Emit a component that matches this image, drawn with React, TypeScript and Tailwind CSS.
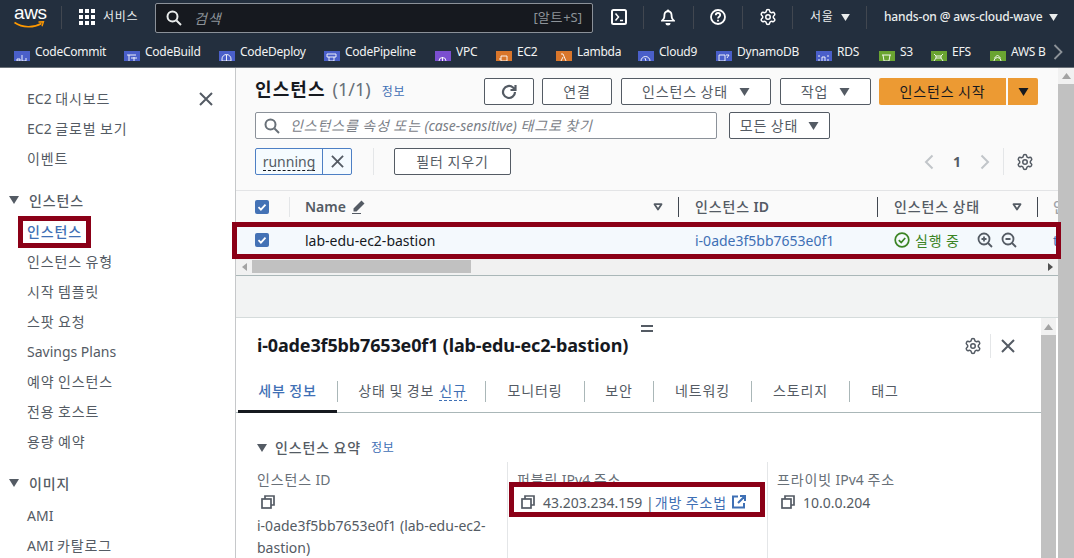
import React from "react";
import { Settings } from "lucide-react";

const FONT = { fontFamily: '"Noto Sans","Noto Sans CJK KR",sans-serif' };

// Hangul in the reference is set a little wider than the installed CJK face.
const K = ({ children, k = "" }: { children: string; k?: string }) => (
  <>
    {children.split(/([\uac00-\ud7a3]+)/).map((part, i) =>
      i % 2 === 1 ? (
        <span key={i} className={`tracking-[0.06em] ${k}`}>{part}</span>
      ) : (
        <React.Fragment key={i}>{part}</React.Fragment>
      )
    )}
  </>
);

const Tri = ({ c = "#545b64", w = 10, h = 8, outline = false }: { c?: string; w?: number; h?: number; outline?: boolean }) => (
  <svg width={w} height={h} viewBox="0 0 10 8" className="shrink-0">
    {outline ? (
      <path d="M1.5 1.2h7L5 6.6z" fill="none" stroke={c} strokeWidth="1.8" strokeLinejoin="round" />
    ) : (
      <path d="M0 0h10L5 8z" fill={c} />
    )}
  </svg>
);

const Gear = ({ c = "#545b64", s = 18 }: { c?: string; s?: number }) => <Settings size={s} color={c} strokeWidth={2} className="shrink-0" />;

const Close = ({ c = "#545b64", s = 14, sw = 2 }: { c?: string; s?: number; sw?: number }) => (
  <svg width={s} height={s} viewBox="0 0 14 14" stroke={c} strokeWidth={sw} className="shrink-0">
    <path d="M1 1l12 12M13 1L1 13" />
  </svg>
);

const Copy = () => (
  <svg width="14" height="14" viewBox="0 0 14 14" fill="none" stroke="#545b64" strokeWidth="1.7" className="shrink-0">
    <rect x="1" y="4" width="9" height="9" />
    <path d="M4 4V1h9v9h-3" />
  </svg>
);

const Check = () => (
  <span className="flex h-[14px] w-[14px] shrink-0 items-center justify-center rounded-[2px] bg-[#4472b5]">
    <svg width="10" height="10" viewBox="0 0 10 10" fill="none" stroke="#fff" strokeWidth="1.8">
      <path d="M1.5 5.2l2.4 2.4 4.6-5" />
    </svg>
  </span>
);

const Sep = ({ h = "h-[23px]" }: { h?: string }) => <span className={`block w-px shrink-0 bg-[#414750] ${h}`} />;

const favs: [string, string, string, number][] = [
  ["CodeCommit", "#4a5fc9", "M3 8h3v2H3zM8 4v6h4V7", 110],
  ["CodeBuild", "#4a5fc9", "M3 4h9M5 4v6M10 6v4M7 7h6", 95],
  ["CodeDeploy", "#4a5fc9", "M3 8a4.5 4.5 0 0 1 9 0v2H3zM7.5 4v6", 105],
  ["CodePipeline", "#4a5fc9", "M3 3h9v3H3zM5 6v4h5V6", 111],
  ["VPC", "#7b4fd0", "M4 10a3.5 3.5 0 0 1 7 0M7.5 6v4", 61],
  ["EC2", "#d9762b", "M5 5h6v5H5zM3 8h2", 60],
  ["Lambda", "#d9762b", "M5 3h2l3 7M7 6l-2 4", 82],
  ["Cloud9", "#4a5fc9", "M3 10a4.5 4.5 0 0 1 9 0M7 7l1 3", 78],
  ["DynamoDB", "#4a5fc9", "M3 4h6v6H3zM10 4h3l-2 3", 100],
  ["RDS", "#4a5fc9", "M3 4v2M3 8v2M12 4v2M12 8v2M6 10V6h3v4", 63],
  ["S3", "#6aa431", "M3 4h9M4 4l1 6h5l1-6", 52],
  ["EFS", "#6aa431", "M3 3l2 2M12 3l-2 2M5 5h5v2H5zM3 10l2-3M12 10l-2-3", 59],
  ["AWS B", "#6aa431", "M4 10a3.5 3.5 0 0 1 7 0M7.5 4l3 3M7.5 4l-3 3", 58],
];

const Btn = ({ w, children, className = "" }: { w: string; children: React.ReactNode; className?: string }) => (
  <button className={`flex h-[27px] shrink-0 items-center justify-center rounded-[2px] border border-[#545b64] bg-white text-[14px] text-[#545b64] ${w} ${className}`}>
    {children}
  </button>
);

const navTop = ["EC2 대시보드", "EC2 글로벌 보기", "이벤트"];
const navInst = ["인스턴스 유형", "시작 템플릿", "스팟 요청", "Savings Plans", "예약 인스턴스", "전용 호스트", "용량 예약"];

const NavItem = ({ children }: { children: string }) => (
  <div className="flex h-[30px] items-center pl-[27px] text-[14px] text-[#545b64]">
    <span><K>{children}</K></span>
  </div>
);
const NavHead = ({ children, className = "" }: { children: string; className?: string }) => (
  <div className={`flex h-[30px] items-center gap-[10px] pl-[9px] text-[14px] font-medium text-[#545b64] ${className}`}>
    <Tri />
    <span><K>{children}</K></span>
  </div>
);

const Sidebar = () => (
  <aside className="relative w-[236px] shrink-0 border-r border-[#c6c8ca] bg-white pt-[15px]">
    <button className="absolute left-[199px] top-[24px]">
      <Close />
    </button>
    {navTop.map((n) => (
      <NavItem key={n}>{n}</NavItem>
    ))}
    <NavHead className="mt-[12px]">인스턴스</NavHead>
    <div className="mt-[1px] flex h-[30px] items-center pl-[27px] text-[14px] font-medium text-[#3f70b5]">
      <span><K>인스턴스</K></span>
    </div>
    {navInst.map((n) => (
      <NavItem key={n}>{n}</NavItem>
    ))}
    <NavHead className="mt-[12px]">이미지</NavHead>
    <div className="h-[2px]" />
    <NavItem>AMI</NavItem>
    <NavItem>AMI 카탈로그</NavItem>
    {/* annotation frame */}
    <div className="absolute left-[18px] top-[148px] h-[32px] w-[73px] border-[5px] border-[#8b0017]" />
  </aside>
);

const VBarTop = ({ className = "" }: { className?: string }) => (
  <div className={`flex h-[16px] items-center justify-center ${className}`}>
    <svg width="9" height="6" viewBox="0 0 9 6">
      <path d="M0 6L4.5 0 9 6z" fill="#a3a3a3" />
    </svg>
  </div>
);

const Top = () => (
  <section className="relative h-[207px] shrink-0 bg-[#fafafa]">
    <div className="flex h-[122px] flex-col pl-[19px] pr-[20px] pt-[10px]">
      <div className="flex h-[27px] items-center justify-between">
        <div className="mb-[4px] flex items-baseline">
          <h1 className="text-[18px] font-bold text-[#16191f]"><K>인스턴스</K></h1>
          <span className="ml-[7px] text-[18px] text-[#687078]">(1/1)</span>
          <span className="ml-[11px] text-[12px] text-[#3f70b5]"><K>정보</K></span>
        </div>
        <div className="flex items-center">
          <Btn w="w-[50px]">
            <svg width="18" height="18" viewBox="0 0 18 18" fill="none" stroke="#545b64" strokeWidth="2.2">
              <path d="M15 9a6 6 0 1 1-2-4.5L15 6.5M15.5 2v5h-5" />
            </svg>
          </Btn>
          <Btn w="w-[70px]" className="ml-[8px]"><span><K>연결</K></span></Btn>
          <Btn w="w-[150px]" className="ml-[9px] gap-[11px]">
            <span><K>인스턴스 상태</K></span> <Tri w={11} h={8} />
          </Btn>
          <Btn w="w-[91px]" className="ml-[9px] gap-[11px]">
            <span><K>작업</K></span> <Tri w={11} h={8} />
          </Btn>
          <button className="ml-[8px] h-[27px] w-[127px] rounded-l-[2px] bg-[#ec9a33] text-[14px] text-[#16191f]"><K>인스턴스 시작</K></button>
          <button className="ml-[2px] flex h-[27px] w-[30px] items-center justify-center rounded-r-[2px] bg-[#ec9a33]">
            <Tri c="#16191f" w={11} h={8} />
          </button>
        </div>
      </div>
      <div className="mt-[7px] flex items-center">
        <div className="flex h-[27px] w-[462px] items-center rounded-[2px] border border-[#8b9199] bg-white pl-[8px]">
          <svg width="16" height="16" viewBox="0 0 16 16" fill="none" stroke="#687078" strokeWidth="2">
            <circle cx="6.5" cy="6.5" r="5" />
            <path d="M10.5 10.5L15 15" />
          </svg>
          <span className="ml-[10px] text-[14px] italic text-[#7b8087]"><K>인스턴스를 속성 또는 (case-sensitive) 태그로 찾기</K></span>
        </div>
        <Btn w="w-[101px]" className="ml-[12px] gap-[10px]">
          <span><K>모든 상태</K></span> <Tri w={11} h={8} />
        </Btn>
      </div>
      <div className="mt-[9px] flex items-center">
        <div className="flex h-[27px] w-[97px] items-center rounded-[2px] border border-[#4d7fc4] bg-[#f5fbff]">
          <span className="flex h-full w-[67px] items-center justify-center border-r border-[#4d7fc4] text-[14px] text-[#545b64]">
            <span className="border-b border-dashed border-[#16191f] leading-[17px]">running</span>
          </span>
          <span className="flex flex-1 items-center justify-center">
            <Close s={13} />
          </span>
        </div>
        <span className="ml-[21px] h-[27px] w-px bg-[#e4e6e8]" />
        <Btn w="w-[117px]" className="ml-[20px]"><span><K>필터 지우기</K></span></Btn>
        <div className="ml-auto flex items-center">
          <svg width="10" height="16" viewBox="0 0 10 16" fill="none" stroke="#c1c5c9" strokeWidth="2">
            <path d="M8.5 1.5L2 8l6.5 6.5" />
          </svg>
          <span className="ml-[19px] text-[14px] font-bold text-[#545b64]">1</span>
          <svg width="10" height="16" viewBox="0 0 10 16" fill="none" stroke="#c1c5c9" strokeWidth="2" className="ml-[19px]">
            <path d="M1.5 1.5L8 8l-6.5 6.5" />
          </svg>
          <span className="ml-[13px] h-[27px] w-px bg-[#e4e6e8]" />
          <span className="ml-[12px] mr-[4px]">
            <Gear />
          </span>
        </div>
      </div>
    </div>
    <div className="border-t border-[#e3e4e6]">
      <div className="flex h-[31px] items-center overflow-hidden text-[14px] font-semibold text-[#545b64]">
        <div className="flex h-full w-[54px] shrink-0 items-center pl-[19px]">
          <Check />
          <span className="ml-[20px] h-[20px] w-px bg-[#e4e6e8]" />
        </div>
        <div className="flex h-full w-[389px] shrink-0 items-center pl-[15px]">
          <span>Name</span>
          <svg width="15" height="15" viewBox="0 0 15 15" className="ml-[5px]" fill="#545b64">
            <path d="M10.5 1.5l3 3-8 8H2.5v-3zM1 14h9v1H1z" />
          </svg>
          <span className="ml-auto mr-[15px]"><Tri outline /></span>
          <Sep h="h-[20px]" />
        </div>
        <div className="flex h-full w-[199px] shrink-0 items-center pl-[16px]">
          <span><K k="font-medium">인스턴스 ID</K></span>
          <span className="ml-auto"><Sep h="h-[20px]" /></span>
        </div>
        <div className="flex h-full w-[160px] shrink-0 items-center pl-[16px]">
          <span><K k="font-medium">인스턴스 상태</K></span>
          <span className="ml-auto mr-[15px]"><Tri outline /></span>
          <Sep h="h-[20px]" />
        </div>
        <div className="flex h-full flex-1 items-center pl-[15px] font-medium text-[#a0a4a9]">인</div>
      </div>
      <div className="flex h-[36px] items-center overflow-hidden bg-[#f4f9fd] text-[14px]">
        <div className="flex w-[54px] shrink-0 items-center pl-[19px]"><Check /></div>
        <div className="w-[389px] shrink-0 pl-[15px] text-[#16191f]">lab-edu-ec2-bastion</div>
        <div className="w-[199px] shrink-0 pl-[16px] text-[#3f70b5]">i-0ade3f5bb7653e0f1</div>
        <div className="flex w-[160px] shrink-0 items-center pl-[16px]">
          <svg width="16" height="16" viewBox="0 0 16 16" fill="none" stroke="#3b8424" strokeWidth="1.7">
            <circle cx="8" cy="8" r="6.8" />
            <path d="M4.8 8.2l2.4 2.4 4-4.6" />
          </svg>
          <span className="ml-[5px] text-[#3b8424]"><K>실행 중</K></span>
          <svg width="16" height="16" viewBox="0 0 16 16" fill="none" stroke="#545b64" strokeWidth="1.8" className="ml-[17px]">
            <circle cx="7" cy="7" r="5.5" />
            <path d="M11 11l4 4M4.5 7h5M7 4.500v5" />
          </svg>
          <svg width="16" height="16" viewBox="0 0 16 16" fill="none" stroke="#545b64" strokeWidth="1.8" className="ml-[8px]">
            <circle cx="7" cy="7" r="5.5" />
            <path d="M11 11l4 4M4.5 7h5" />
          </svg>
        </div>
        <div className="flex-1 pl-[15px] text-[#3f70b5]">t</div>
      </div>
      <div className="flex h-[17px] items-center bg-[#f1f1f1]">
        <div className="flex w-[16px] items-center justify-center">
          <svg width="5" height="8" viewBox="0 0 5 8"><path d="M5 0v8L0 4z" fill="#a3a3a3" /></svg>
        </div>
        <div className="h-[13px] w-[219px] bg-[#c1c1c1]" />
        <div className="ml-auto flex w-[16px] items-center justify-center">
          <svg width="5" height="8" viewBox="0 0 5 8"><path d="M0 0v8l5-4z" fill="#505050" /></svg>
        </div>
      </div>
    </div>
    <div className="h-px bg-[#aab7b8]" />
    {/* annotation frame */}
    <div className="absolute left-[-4px] top-[154px] h-[37px] w-[829px] border-[5px] border-[#8b0017]" />
  </section>
);

const tabs = ["모니터링", "보안", "네트워킹", "스토리지", "태그"];

const Field = ({ label, className = "", children }: { label: string; className?: string; children: React.ReactNode }) => (
  <div className={`pt-[7px] ${className}`}>
    <div className="text-[14px] leading-[22px] text-[#687078]"><K>{label}</K></div>
    {children}
  </div>
);

const TabSep = () => <span className="mt-[1px] h-[21px] w-px shrink-0 bg-[#aab7b8]" />;

const Detail = () => (
  <section className="relative flex min-h-0 flex-1 overflow-hidden border-t border-[#d5dbdb] bg-white">
    <span className="absolute left-[405px] top-[7px] h-[7px] w-[12px] border-y-2 border-[#545b64]" />
    <div className="min-w-0 w-[805px] shrink-0">
      <div className="flex h-[55px] items-center pl-[21px]">
        <h2 className="mb-[1px] text-[18px] font-bold tracking-[-0.15px] text-[#16191f]">i-0ade3f5bb7653e0f1 (lab-edu-ec2-bastion)</h2>
        <div className="ml-auto flex items-center">
          <Gear />
          <span className="ml-[8px] h-[24px] w-px bg-[#e4e6e8]" />
          <span className="ml-[10px] mr-[26px]"><Close s={14} /></span>
        </div>
      </div>
      <div className="mt-[7px] flex h-[33px] items-start border-b border-[#aab7b8] pl-[2px] text-[14px] text-[#545b64]">
        <div className="flex h-[33px] w-[99px] items-start justify-center border-b-[3px] border-[#16191f] font-medium text-[#3f70b5]">
          <span className="leading-[22px]"><K>세부 정보</K></span>
        </div>
        <TabSep />
        <div className="flex w-[147px] justify-center gap-[5px] pl-[2px]">
          <span className="leading-[22px]"><K>상태 및 경보</K></span>
          <span className="h-[21px] border-b border-dashed border-[#3f70b5] text-[#3f70b5]"><K>신규</K></span>
        </div>
        <TabSep />
        {tabs.map((t, i) => (
          <React.Fragment key={t}>
            <div className={`flex justify-center leading-[22px] ${["w-[98px]", "w-[68px]", "w-[97px]", "w-[97px]", "w-[70px]"][i]}`}>
              <span><K>{t}</K></span>
            </div>
            {i < 4 && <TabSep />}
          </React.Fragment>
        ))}
      </div>
      <div className="flex h-[49px] items-end pb-[4px] pl-[21px]">
        <div className="flex items-center">
          <Tri />
          <span className="ml-[8px] text-[14px] font-medium text-[#545b64]"><K>인스턴스 요약</K></span>
          <span className="ml-[10px] text-[12px] text-[#3f70b5]"><K>정보</K></span>
        </div>
      </div>
      <div className="grid grid-cols-[250px_260px_1fr] pl-[21px] text-[14px] text-[#545b64]">
        <Field label="인스턴스 ID">
          <div className="flex h-[22px] items-center pl-[4px]"><Copy /></div>
          <div className="mt-[2px] w-[235px] leading-[22px]">i-0ade3f5bb7653e0f1 (lab-edu-ec2-bastion)</div>
        </Field>
        <Field label="퍼블릭 IPv4 주소" className="h-[100px] border-l border-[#e4e6e8] pl-[9px]">
          <div className="flex h-[22px] items-center pl-[4px]">
            <Copy />
            <span className="ml-[8px]">43.203.234.159 |</span>
            <span className="ml-[1px] text-[#3f70b5]"><K>개방 주소법</K></span>
            <svg width="14" height="14" viewBox="0 0 14 14" fill="none" stroke="#3f70b5" strokeWidth="2" className="ml-[5px]">
              <path d="M6 1.500H1v11h11V8M8 1h5v5M13 1L6 8" />
            </svg>
          </div>
        </Field>
        <Field label="프라이빗 IPv4 주소" className="h-[100px] border-l border-[#e4e6e8] pl-[9px]">
          <div className="flex h-[22px] items-center pl-[4px]">
            <Copy />
            <span className="ml-[8px]">10.0.0.204</span>
          </div>
        </Field>
      </div>
    </div>
    <div className="w-[15px] shrink-0 bg-[#f1f1f1]">
      <VBarTop className="h-[17px]" />
      <div className="h-full bg-[#c1c1c1]" />
    </div>
    <div className="w-[2px] shrink-0 bg-white" />
    {/* annotation frame */}
    <div className="absolute left-[273px] top-[164px] h-[35px] w-[256px] border-[5px] border-[#8b0017]" />
  </section>
);

export default function App() {
  return (
    <div className="flex h-[558px] w-[1074px] flex-col overflow-hidden bg-white" style={FONT}>
      <header className="flex h-[34px] shrink-0 items-center bg-[#232f3e] text-white">
        <div className="relative ml-[14px] h-[24px] w-[30px] shrink-0">
          <span className="absolute left-0 top-[-2px] text-[19px] leading-[20px] tracking-[-0.4px]" style={{ fontFamily: '"Liberation Sans",sans-serif' }}>aws</span>
          <svg width="31" height="9" viewBox="0 0 31 9" className="absolute left-0 top-[16px]" fill="none">
            <path d="M0.5 1.500c8 5.500 19 5.500 27 1" stroke="#f90" strokeWidth="1.600" />
            <path d="M24.500 1l5-.2-1.500 4.500" stroke="#f90" strokeWidth="1.300" />
          </svg>
        </div>
        <span className="ml-[17px]"><Sep /></span>
        <svg width="16" height="16" viewBox="0 0 16 16" fill="#fff" className="ml-[17px] shrink-0">
          {[0, 6, 12].flatMap((y) => [0, 6, 12].map((x) => <rect key={`${x}${y}`} x={x} y={y} width="4" height="4" />))}
        </svg>
        <span className="ml-[8px] w-[38px] shrink-0 whitespace-nowrap text-[12px] text-[#eaeded]"><K>서비스</K></span>
        <div className="ml-[14px] mt-[2px] flex h-[30px] w-[438px] shrink-0 items-center rounded-[2px] border border-[#8b9199] bg-[#16191f] px-[10px]">
          <svg width="16" height="16" viewBox="0 0 16 16" fill="none" stroke="#eaeded" strokeWidth="2">
            <circle cx="6.500" cy="6.500" r="5" />
            <path d="M10.500 10.500L15 15" />
          </svg>
          <span className="ml-[12px] text-[14px] italic text-[#8d9399]"><K>검색</K></span>
          <span className="ml-auto text-[13px] text-[#8d9399]"><K>[알트+S]</K></span>
        </div>
        <svg width="16" height="16" viewBox="0 0 16 16" fill="none" stroke="#fff" strokeWidth="2" className="ml-[18px] shrink-0">
          <rect x="1" y="1" width="14" height="14" rx="1.500" />
          <path d="M4.500 4.500L7.500 8l-3 3.500M9 11.500h3" strokeWidth="1.500" />
        </svg>
        <span className="ml-[16px]"><Sep /></span>
        <svg width="16" height="17" viewBox="0 0 16 17" fill="#fff" className="ml-[16px] shrink-0">
          <path d="M8 0.500a1.500 1.500 0 0 1 1.400 1.100C11.500 2.300 12.500 4 12.500 6.500c0 2.500 1 3.500 2.500 5v1H1v-1c1.500-1.500 2.500-2.500 2.500-5 0-2.500 1-4.200 3.100-4.900A1.500 1.500 0 0 1 8 .5zM5.500 14h5a2.500 2.500 0 0 1-5 0z" fillRule="evenodd" />
          <path d="M5.300 6.500c0 2.200-.6 3.500-1.500 4.500h8.400c-.9-1-1.500-2.300-1.500-4.500 0-2-1-3.200-2.700-3.200S5.300 4.500 5.300 6.500z" fill="#232f3e" />
        </svg>
        <span className="ml-[17px]"><Sep /></span>
        <svg width="16" height="16" viewBox="0 0 16 16" fill="none" stroke="#fff" strokeWidth="1.800" className="ml-[16px] shrink-0">
          <circle cx="8" cy="8" r="7" />
          <path d="M5.800 6.200C5.800 4.800 6.800 4 8 4s2.200.8 2.200 2c0 1.700-2.200 1.700-2.200 3.500M8 10.800v1.700" />
        </svg>
        <span className="ml-[16px]"><Sep /></span>
        <span className="ml-[16px]"><Gear c="#fff" /></span>
        <span className="ml-[15px]"><Sep /></span>
        <span className="ml-[17px] w-[24px] shrink-0 whitespace-nowrap text-[12px] text-[#eaeded]"><K>서울</K></span>
        <span className="ml-[7px]"><Tri c="#eaeded" w={9} h={7} /></span>
        <span className="ml-[16px]"><Sep /></span>
        <span className="ml-[17px] w-[158px] shrink-0 whitespace-nowrap text-[12px] font-medium tracking-[-0.15px] text-[#eaeded]">hands-on @ aws-cloud-wave</span>
        <span className="ml-[7px]"><Tri c="#eaeded" w={9} h={7} /></span>
      </header>
      <nav className="relative flex h-[34px] shrink-0 items-start overflow-hidden border-b border-[#6b7178] bg-[#232f3e] pl-[14px] text-white">
        {favs.map(([name, color, d, width]) => (
          <div key={name} className="flex shrink-0 items-start" style={{ width }}>
            <span className="mt-[17px] block h-[10px] w-[16px] overflow-hidden" style={{ background: color }}>
              <svg width="16" height="12" viewBox="0 0 16 12" fill="none" stroke="#fff" strokeWidth="0.900"><path d={d} /></svg>
            </span>
            <span className="ml-[5px] mt-[8px] text-[12px] leading-[20px] tracking-[-0.25px] text-[#f2f3f3]">{name}</span>
          </div>
        ))}
        <div className="absolute right-0 top-0 flex h-full w-[28px] items-center justify-center bg-[#232f3e]">
          <svg width="10" height="16" viewBox="0 0 10 16" fill="none" stroke="#8d9399" strokeWidth="1.800" className="ml-[-4px] mt-[2px]">
            <path d="M1.500 1L8.500 8l-7 7" />
          </svg>
        </div>
      </nav>
      <div className="flex min-h-0 flex-1">
        <Sidebar />
        <main className="flex min-w-0 flex-1 flex-col bg-[#f2f3f3]">
          <Top />
          <div className="h-[42px] shrink-0" />
          <Detail />
        </main>
        <div className="w-[16px] shrink-0 bg-[#f1f1f1]">
          <VBarTop />
          <div className="h-full bg-[#c1c1c1]" />
        </div>
      </div>
    </div>
  );
}
